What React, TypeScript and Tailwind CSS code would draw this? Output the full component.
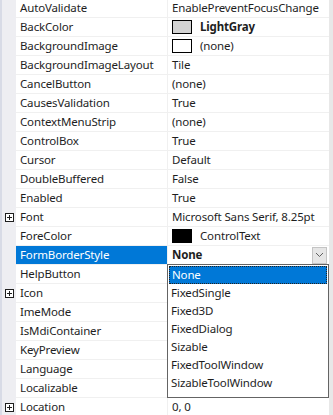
import { ReactNode } from 'react'

type Prop = {
  name: string
  value?: ReactNode
  expandable?: boolean
  selected?: boolean
}

function Swatch({ color }: { color: string }) {
  return <span className={`mr-[8px] inline-block h-[14px] w-[20px] shrink-0 border border-black ${color}`} />
}

// values under the open dropdown are hidden, so they are left empty
const props: Array<Prop> = [
  { name: 'AutoValidate', value: 'EnablePreventFocusChange' },
  {
    name: 'BackColor',
    value: (
      <>
        <Swatch color="bg-[#d3d3d3]" />
        <span className="font-bold">LightGray</span>
      </>
    )
  },
  {
    name: 'BackgroundImage',
    value: (
      <>
        <Swatch color="bg-white" />
        <span>(none)</span>
      </>
    )
  },
  { name: 'BackgroundImageLayout', value: 'Tile' },
  { name: 'CancelButton', value: '(none)' },
  { name: 'CausesValidation', value: 'True' },
  { name: 'ContextMenuStrip', value: '(none)' },
  { name: 'ControlBox', value: 'True' },
  { name: 'Cursor', value: 'Default' },
  { name: 'DoubleBuffered', value: 'False' },
  { name: 'Enabled', value: 'True' },
  { name: 'Font', value: 'Microsoft Sans Serif, 8.25pt', expandable: true },
  {
    name: 'ForeColor',
    value: (
      <>
        <Swatch color="bg-black" />
        <span>ControlText</span>
      </>
    )
  },
  { name: 'FormBorderStyle', selected: true },
  { name: 'HelpButton' },
  { name: 'Icon', expandable: true },
  { name: 'ImeMode' },
  { name: 'IsMdiContainer' },
  { name: 'KeyPreview' },
  { name: 'Language' },
  { name: 'Localizable' },
  { name: 'Location', value: '0, 0', expandable: true }
]

const options = ['None', 'FixedSingle', 'Fixed3D', 'FixedDialog', 'Sizable', 'FixedToolWindow', 'SizableToolWindow']

function PlusBox() {
  return (
    <span className="relative block h-[9px] w-[9px] border border-[#1e1e1e] bg-white">
      <span className="absolute left-[1px] top-[3px] h-[1px] w-[5px] bg-[#1e1e1e]" />
      <span className="absolute left-[3px] top-[1px] h-[5px] w-[1px] bg-[#1e1e1e]" />
    </span>
  )
}

export default function App() {
  return (
    <div
      className="relative h-[415px] w-[333px] overflow-hidden bg-white text-[11.5px] tracking-[-0.15px] text-[#1e1e1e]"
      style={{ fontFamily: '"Noto Sans", "Open Sans", sans-serif' }}
    >
      <div className="flex h-full">
        <div className="w-[329px] -mt-[1px]">
          {props.map((p) => (
            <div key={p.name} className="flex h-[19px]">
              <div className="flex w-[16px] shrink-0 items-center justify-center border-l-2 border-[#d8dbe6] bg-[#eeeef2]">
                {p.expandable && <PlusBox />}
              </div>
              <div
                className={`flex w-[151px] shrink-0 items-center border-b border-[#f0f0f0] pl-[4px] ${
                  p.selected ? 'bg-[#0078d7] text-white' : ''
                }`}
              >
                <span className="whitespace-nowrap leading-none">{p.name}</span>
              </div>
              <div className="w-[1px] shrink-0 bg-[#f0f0f0]" />
              <div className="flex min-w-0 flex-1 items-center border-b border-[#f0f0f0] pl-[4px] pr-[2px]">
                {p.selected ? (
                  <>
                    <span className="flex-1 font-bold leading-none">None</span>
                    <span className="flex h-[17px] w-[15px] items-center justify-center border border-[#c4c4c4] bg-[#e6e6e6]">
                      <svg width="9" height="6" viewBox="0 0 9 6" fill="none">
                        <path d="M1 1 L4.5 4.5 L8 1" stroke="#606060" strokeWidth="1" />
                      </svg>
                    </span>
                  </>
                ) : (
                  <span className="flex items-center whitespace-nowrap leading-none">{p.value}</span>
                )}
              </div>
            </div>
          ))}
        </div>
        <div className="w-[4px] bg-[#e8e8e8]" />
      </div>

      <div className="absolute left-[167px] top-[264px] h-[134px] w-[162px] border border-[#646464] bg-white p-[1px]">
        {options.map((o, i) => (
          <div
            key={o}
            className={`flex h-[18px] items-center pl-[2px] leading-none ${
              i === 0 ? 'border border-dotted border-[#222] bg-[#0078d7] pl-[1px] text-white' : ''
            }`}
          >
            {o}
          </div>
        ))}
      </div>
    </div>
  )
}
